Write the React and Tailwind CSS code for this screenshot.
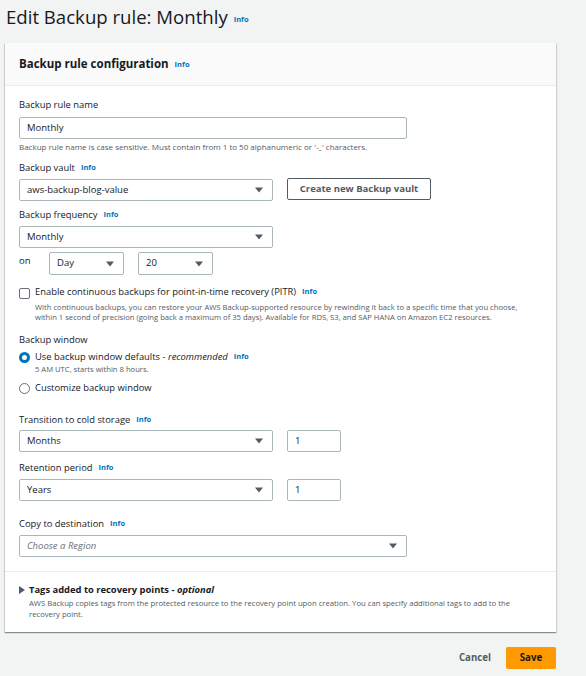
import React from "react";

const Info = ({ className = "" }) => (
  <span className={"text-[7.5px] font-bold text-[#0073bb] " + className}>Info</span>
);

const Arrow = () => (
  <svg width="8" height="6" viewBox="0 0 8 6" className="shrink-0">
    <path d="M0 0.5 H8 L4 5.5 Z" fill="#545b64" />
  </svg>
);

const Select = ({ value, w, h = "h-[22px]", italic = false }) => (
  <div className={`${w} ${h} border border-[#aab7b8] rounded-[2px] bg-white flex items-center justify-between pl-[7px] pr-[9px]`}>
    <span className={`text-[9.5px] ${italic ? "italic text-[#687078]" : "text-[#16191f]"}`}>{value}</span>
    <Arrow />
  </div>
);

const Input = ({ value, w }) => (
  <div className={`${w} h-[22px] border border-[#aab7b8] rounded-[2px] bg-white flex items-center pl-[7px]`}>
    <span className="text-[9.5px] text-[#16191f]">{value}</span>
  </div>
);

const Label = ({ children, className = "" }) => (
  <div className={"h-[14px] flex items-center gap-[6px] text-[9.4px] text-[#16191f] " + className}>{children}</div>
);

export default function App() {
  return (
    <div
      className="w-[586px] h-[676px] bg-[#f2f3f3] overflow-hidden text-[#16191f]"
      style={{ fontFamily: '"Open Sans", "Noto Sans", sans-serif' }}
    >
      <div className="pt-[4px] pl-[6px] h-[43px] flex items-start">
        <div className="flex items-center gap-[6px] h-[26px]">
          <span className="text-[18.6px] leading-[26px] text-[#16191f]">Edit Backup rule: Monthly</span>
          <Info className="mt-[5px]" />
        </div>
      </div>

      <div className="ml-[5px] w-[551px] h-[589px] bg-white shadow-[0_1px_1px_0_rgba(0,28,36,0.3),1px_1px_1px_0_rgba(0,28,36,0.12),-1px_1px_1px_0_rgba(0,28,36,0.12)] flex flex-col">
        <div className="h-[43px] bg-[#fafafa] border-b border-[#eaeded] flex items-center pl-[14px] gap-[6px]">
          <span className="text-[11.5px] font-bold text-[#16191f]">Backup rule configuration</span>
          <Info className="mt-[2px]" />
        </div>

        <div className="pl-[14px] flex flex-col">
          <Label className="mt-[12px]">Backup rule name</Label>
          <div className="mt-[5px]"><Input value="Monthly" w="w-[388px]" /></div>
          <div className="mt-[3px] h-[10px] flex items-center text-[8px] text-[#545b64] whitespace-nowrap">
            Backup rule name is case sensitive. Must contain from 1 to 50 alphanumeric or '-_' characters.
          </div>

          <Label className="mt-[9px]">Backup vault <Info /></Label>
          <div className="mt-[3px] flex items-start gap-[14px]">
            <div className="mt-[1px]"><Select value="aws-backup-blog-value" w="w-[254px]" /></div>
            <div className="w-[144px] h-[22px] border border-[#545b64] rounded-[2px] bg-white flex items-center justify-center text-[9.5px] font-bold text-[#545b64]">
              Create new Backup vault
            </div>
          </div>

          <Label className="mt-[7px]">Backup frequency <Info /></Label>
          <div className="mt-[4px]"><Select value="Monthly" w="w-[254px]" /></div>
          <div className="mt-[4px] flex items-center">
            <span className="w-[30px] text-[9.5px] -mt-[4px]">on</span>
            <Select value="Day" w="w-[75px]" h="h-[23px]" />
            <div className="w-[14px]" />
            <Select value="20" w="w-[75px]" h="h-[23px]" />
          </div>

          <div className="mt-[10px] flex items-start">
            <div className="w-[11px] h-[11px] mt-[3px] border border-[#687078] rounded-[2px] bg-white shrink-0" />
            <div className="ml-[5px] flex flex-col">
              <div className="h-[14px] flex items-center gap-[6px] text-[9.4px]">
                Enable continuous backups for point-in-time recovery (PITR) <Info />
              </div>
              <div className="mt-[3px] text-[7.65px] leading-[10px] text-[#545b64] whitespace-nowrap">
                With continuous backups, you can restore your AWS Backup-supported resource by rewinding it back to a specific time that you choose,
                <br />
                within 1 second of precision (going back a maximum of 35 days). Available for RDS, S3, and SAP HANA on Amazon EC2 resources.
              </div>
            </div>
          </div>

          <Label className="mt-[11px]">Backup window</Label>
          <div className="mt-[3px] flex items-start">
            <div className="w-[11px] h-[11px] mt-[2px] rounded-full border-[3.5px] border-[#0073bb] bg-white shrink-0" />
            <div className="ml-[5px] flex flex-col">
              <div className="h-[14px] flex items-center gap-[6px] text-[9.4px]">
                <span>Use backup window defaults - <i>recommended</i></span> <Info />
              </div>
              <div className="mt-[1px] h-[10px] flex items-center text-[7.65px] text-[#545b64]">5 AM UTC, starts within 8 hours.</div>
            </div>
          </div>
          <div className="mt-[6px] flex items-start">
            <div className="w-[11px] h-[11px] mt-[2px] rounded-full border border-[#687078] bg-white shrink-0" />
            <div className="ml-[5px] h-[14px] flex items-center text-[9.4px]">Customize backup window</div>
          </div>

          <Label className="mt-[18px]">Transition to cold storage <Info /></Label>
          <div className="mt-[3px] flex items-center gap-[14px]">
            <Select value="Months" w="w-[254px]" />
            <Input value="1" w="w-[54px]" />
          </div>

          <Label className="mt-[9px]">Retention period <Info /></Label>
          <div className="mt-[4px] flex items-center gap-[14px]">
            <Select value="Years" w="w-[254px]" />
            <Input value="1" w="w-[54px]" />
          </div>

          <Label className="mt-[16px]">Copy to destination <Info /></Label>
          <div className="mt-[4px]"><Select value="Choose a Region" w="w-[388px]" italic /></div>
        </div>

        <div className="mt-[14px] border-t border-[#eaeded] pl-[14px] pt-[11px] flex items-start">
          <svg width="6" height="8" viewBox="0 0 6 8" className="mt-[3px] shrink-0">
            <path d="M0 0 L6 4 L0 8 Z" fill="#545b64" />
          </svg>
          <div className="ml-[4px] flex flex-col">
            <div className="h-[14px] flex items-center text-[9.4px] font-bold">
              <span>Tags added to recovery points - <i>optional</i></span>
            </div>
            <div className="mt-[1px] text-[7.7px] leading-[11px] text-[#545b64] w-[505px]">
              AWS Backup copies tags from the protected resource to the recovery point upon creation. You can specify additional tags to add to the recovery point.
            </div>
          </div>
        </div>
      </div>

      <div className="w-[556px] mt-[15px] flex items-center justify-end gap-[15px]">
        <span className="text-[9.7px] font-bold text-[#545b64]">Cancel</span>
        <div className="w-[50px] h-[22px] bg-[#ff9900] rounded-[2px] flex items-center justify-center text-[9.7px] font-bold text-[#16191f]">
          Save
        </div>
      </div>
    </div>
  );
}
